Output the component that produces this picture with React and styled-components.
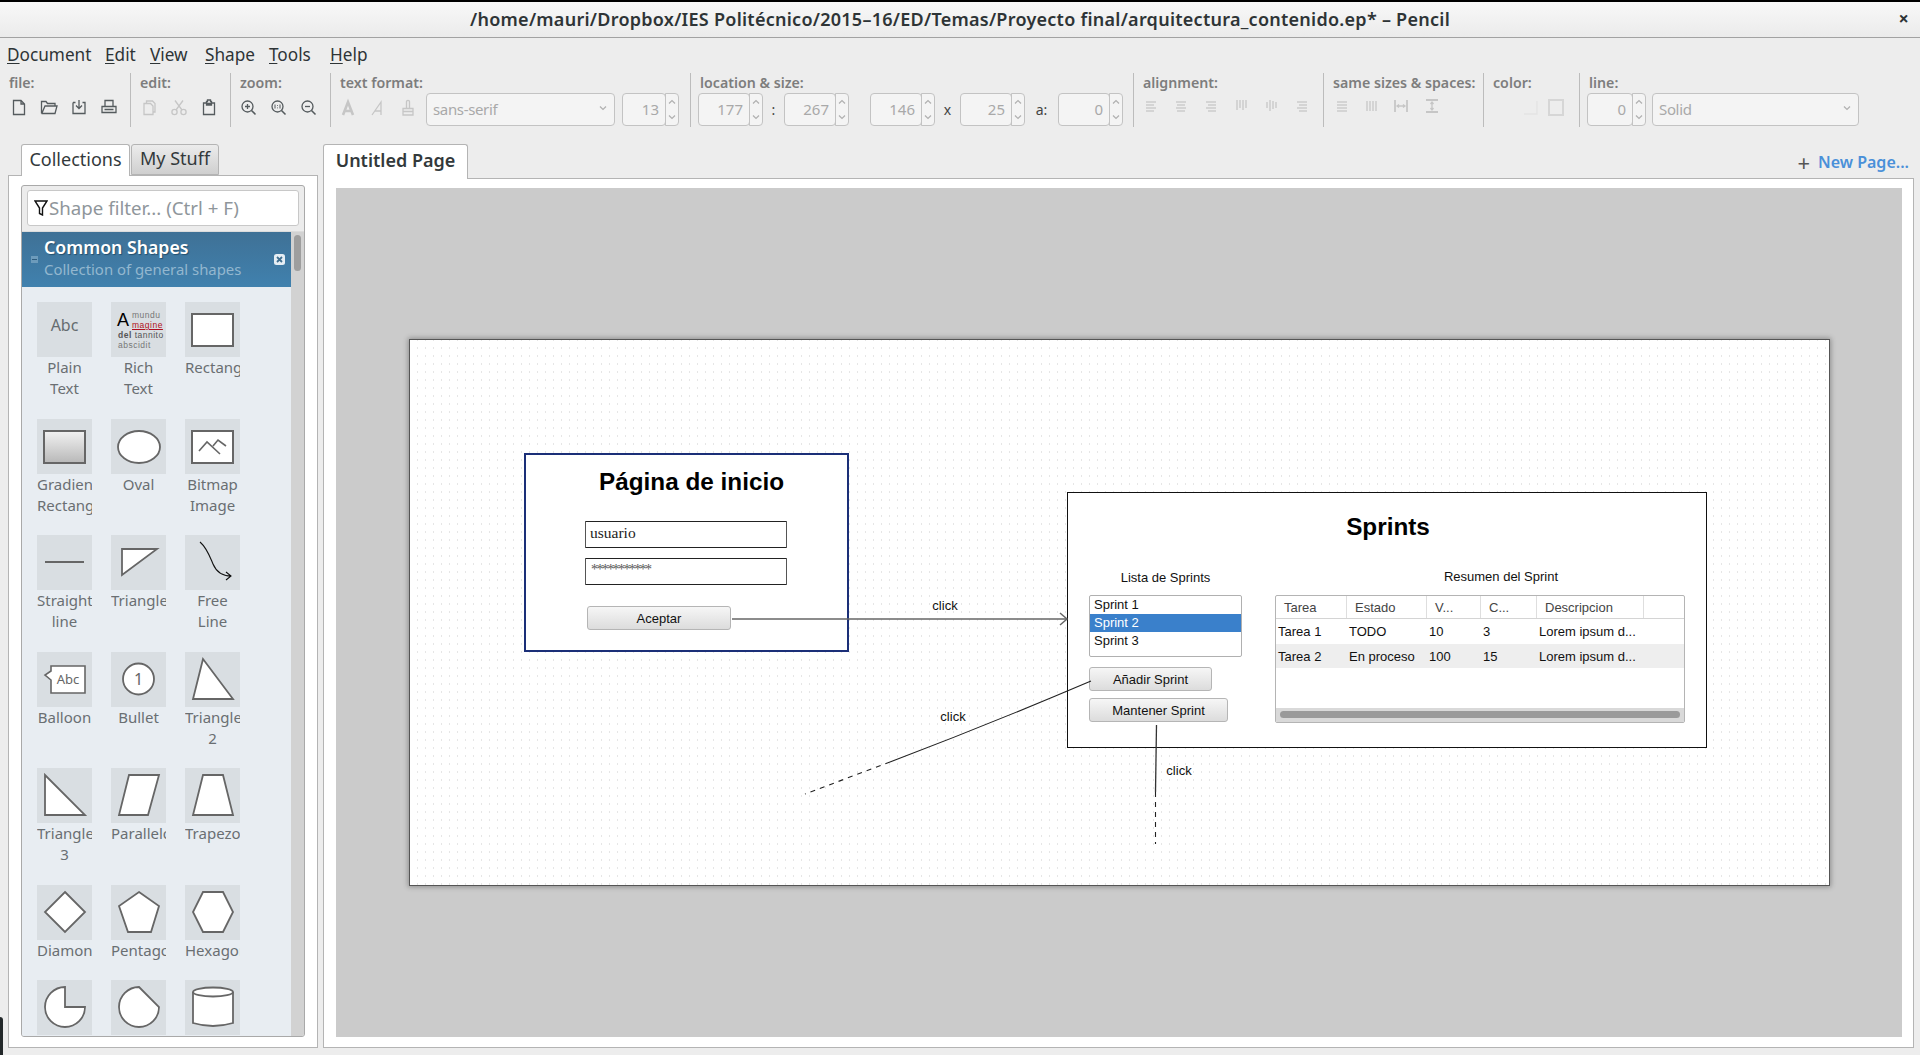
import React from "react";
import styled, { createGlobalStyle } from "styled-components";

const UI = `"Noto Sans", "Open Sans", sans-serif`;
const SANS = `"Liberation Sans", Arial, sans-serif`;

const Global = createGlobalStyle`
  html, body { margin: 0; padding: 0; background: #000; overflow: hidden; }
  #root { width: 1920px; height: 1055px; }
  * { box-sizing: border-box; }
`;

const Screen = styled.div`
  position: relative; width: 1920px; height: 1055px; background: #000;
  padding-top: 2px; overflow: hidden; font-family: ${UI};
`;
const Win = styled.div`
  height: 1053px; background: #ededed; border-radius: 5px 5px 0 0;
  display: flex; flex-direction: column;
`;
const TitleBar = styled.div`
  height: 36px; flex: none; display: flex; align-items: center; justify-content: center;
  position: relative; background: linear-gradient(#f8f8f8, #ebebeb); padding-bottom: 1px;
  border-bottom: 1px solid #a2a2a2; color: #2e3436; font-size: 18px; font-weight: 600; letter-spacing: 0.26px;
`;
const CloseX = styled.span`
  position: absolute; right: 11px; top: 4px; font-size: 18px; font-weight: 700; color: #2e3436;
`;
const MenuBar = styled.div`
  height: 35px; flex: none; display: flex; align-items: center; padding: 0 0 2px 7px;
  color: #2e3436; font-size: 17.2px;
`;
const MenuItem = styled.span`
  width: ${p => p.$w}px; flex: none;
  u { text-underline-offset: 2px; text-decoration-thickness: 1px; }
`;
const Toolbar = styled.div`
  height: 54px; flex: none; display: flex;
`;
const Group = styled.div`
  width: ${p => p.$w}px; flex: none; padding-left: 9px; border-right: 1px solid ${p => (p.$last ? "transparent" : "#bcbcbc")};
  display: flex; flex-direction: column;
`;
const GroupLabel = styled.div`
  height: 20px; line-height: 20px; font-size: 14.2px; font-weight: 600; color: #7d7d7d; white-space: nowrap;
`;
const Controls = styled.div`
  display: flex; align-items: flex-start; height: 33px; margin-left: ${p => p.$ml}px;
`;
const IconCell = styled.svg`
  width: 30px; height: 24px; margin-top: 3px; flex: none; fill: none; stroke-width: 1.3px;
  stroke: ${p => (p.$off ? "#c6c6c6" : "#555b5e")};
`;
const Select = styled.div`
  width: ${p => p.$w}px; height: 33px; flex: none; border: 1px solid #c3c3c3; border-radius: 4px; background: #f4f4f4;
  display: flex; align-items: center; justify-content: space-between; padding: 0 6px 2px;
  color: #a9a9a9; font-size: 15px; letter-spacing: -0.35px;
`;
const NumBox = styled.div`
  width: ${p => p.$w}px; height: 33px; flex: none; border: 1px solid #c3c3c3; border-radius: 4px; background: #f4f4f4;
  display: flex; align-items: center; justify-content: flex-end; padding: 0 6px 2px 0;
  color: #a9a9a9; font-size: 15px;
`;
const Spin = styled.div`
  width: 14px; height: 33px; flex: none; border: 1px solid #c3c3c3; border-radius: 0 4px 4px 0; margin-left: -1px;
  background: #f4f4f4; display: flex; flex-direction: column; align-items: center; justify-content: space-around;
`;
const Sep = styled.span`
  width: ${p => p.$w}px; flex: none; height: 33px; line-height: 33px; text-align: center; color: #444; font-size: 14px;
`;
const Gap = styled.span` width: ${p => p.$w}px; flex: none; `;

const Main = styled.div`
  flex: 1; display: flex; padding: 17px 0 7px 8px; min-height: 0;
`;
const Side = styled.div`
  width: 310px; flex: none; display: flex; flex-direction: column; margin-right: 5px;
`;
const TabRow = styled.div`
  height: 31px; flex: none; display: flex; gap: 1px; padding-left: 13px;
`;
const SideTab = styled.div`
  width: ${p => p.$w}px; border: 1px solid #b4b4b4; border-bottom: ${p => (p.$on ? "none" : "1px solid #b4b4b4")};
  border-radius: 3px 3px 0 0; background: ${p => (p.$on ? "#fff" : "linear-gradient(#ececec,#cfcfcf)")};
  display: flex; align-items: center; justify-content: center; font-size: 18px; color: #33393b; padding-bottom: 3px;
  position: relative; z-index: 1; margin-bottom: ${p => (p.$on ? "-1px" : "0")};
`;
const SidePanel = styled.div`
  flex: 1; min-height: 0; background: #fff; border: 1px solid #b4b4b4; padding: 9px 12px 10px;
`;
const Collection = styled.div`
  height: 100%; border: 1px solid #a9a9a9; border-radius: 3px; background: #ececec;
  display: flex; flex-direction: column; overflow: hidden;
`;
const FilterWrap = styled.div` height: 46px; flex: none; padding: 4px 5px 0; border-bottom: 1px solid #dcdcdc; `;
const Filter = styled.div`
  height: 36px; background: #fff; border: 1px solid #c8c8c8; border-radius: 3px; display: flex; align-items: center;
  padding: 0 0 1px 6px; gap: 1px; color: #8f969b; font-size: 18.7px; white-space: nowrap;
`;
const ScrollArea = styled.div` flex: 1; display: flex; min-height: 0; `;
const Shapes = styled.div` flex: 1; min-width: 0; background: #e8edf2; overflow: hidden; `;
const SBar = styled.div` width: 13px; flex: none; background: #d2d2d2; padding: 3px 3px; `;
const SThumb = styled.div` height: 36px; background: #9e9e9e; border-radius: 4px; `;
const CollHead = styled.div`
  height: 55px; background: linear-gradient(#3f7196, #4081ae); position: relative; padding: 3px 0 0 22px;
`;
const CollTitle = styled.div`
  color: #fff; font-weight: 600; font-size: 17.7px; line-height: 24px; text-shadow: 1px 1px 1px #23506e;
`;
const CollSub = styled.div` color: #93b7cf; font-size: 14.9px; line-height: 21px; white-space: nowrap; `;
const Minus = styled.span`
  position: absolute; left: 9px; top: 24px; width: 7px; height: 7px; background: #6d9bbb; display: flex; align-items: center;
  &::after { content: ""; display: block; width: 5px; height: 1px; margin: 0 1px; background: #2e5c7d; }
`;
const HeadClose = styled.svg` position: absolute; right: 6px; top: 22px; width: 11px; height: 11px; `;
const ShapeGrid = styled.div`
  display: grid; grid-template-columns: repeat(3, 55px); column-gap: 19px; row-gap: 19.5px;
  padding: 15px 0 0 15px; align-items: start;
`;
const ShapeItem = styled.div` width: 55px; `;
const Tile = styled.div` width: 55px; height: 55px; background: #d9dee2; position: relative; `;
const TileSvg = styled.svg` width: 55px; height: 55px; display: block; `;
const ShapeName = styled.div`
  width: 55px; overflow: hidden; text-align: center; font-size: 15px; line-height: 21px; color: #6a6f72;
`;
const RichA = styled.span`
  position: absolute; left: 6px; top: 8px; font: 18px/21px ${SANS}; color: #000;
`;
const RichLine = styled.span`
  position: absolute; left: ${p => p.$x}px; top: ${p => p.$y}px; font: 8.5px/9px ${SANS};
  color: ${p => p.$c}; letter-spacing: 0.5px; white-space: nowrap;
  text-decoration: ${p => (p.$u ? "underline" : "none")};
`;
const PlainAbc = styled.span`
  position: absolute; left: 0; right: 0; top: 11px; text-align: center; font-size: 16px; line-height: 24px; color: #666c70;
`;

const Work = styled.div` flex: 1; display: flex; flex-direction: column; min-width: 0; margin-right: 6px; `;
const WorkTabs = styled.div`
  height: 34px; flex: none; display: flex; justify-content: space-between;
`;
const PageTab = styled.div`
  width: 145px; border: 1px solid #b4b4b4; border-bottom: none; background: #fff; border-radius: 3px 3px 0 0;
  display: flex; align-items: center; justify-content: center; font-size: 18px; font-weight: 600; color: #33393b; padding-bottom: 4px;
  margin-bottom: -1px; position: relative; z-index: 1;
`;
const NewPage = styled.div`
  display: flex; align-items: center; gap: 6px; padding-right: 5px; height: 36px; font-size: 16px; font-weight: 600; color: #4a90d9;
`;
const Plus = styled.span` color: #555; font-size: 22px; font-weight: 400; line-height: 1; margin-right: 2px; `;
const Pane = styled.div`
  flex: 1; min-height: 0; border: 1px solid #b4b4b4; background: #fff; padding: 9px 11px 10px 12px;
`;
const Gray = styled.div`
  height: 100%; background: #cbcbcb; padding: 151px 0 0 73px; overflow: hidden;
`;
const Page = styled.div`
  position: relative; width: 1421px; height: 547px; box-shadow: inset 0 0 0 1px #555, 0 0 5px 1px rgba(0,0,0,.3);
  background-image: linear-gradient(#fff 6px, transparent 6px), linear-gradient(90deg, #e6e6e6 1px, #fff 1px);
  background-size: 8px 8px; background-position: 0 2px;
  font-family: ${SANS}; color: #111;
`;
const Frame = styled.div`
  position: absolute; left: ${p => p.$x}px; top: ${p => p.$y}px; width: ${p => p.$w}px; height: ${p => p.$h}px;
  background: #fff; border: ${p => p.$b};
`;
const Heading = styled.div`
  position: absolute; left: ${p => p.$x}px; top: ${p => p.$y}px; width: ${p => p.$w}px; text-align: center;
  font-weight: 700; font-size: 24.3px; line-height: 30px; color: #000;
`;
const Caption = styled.div`
  position: absolute; left: ${p => p.$x}px; top: ${p => p.$y}px; width: ${p => p.$w}px; text-align: center;
  font-size: 13px; line-height: 16px; color: #111; white-space: nowrap;
`;
const WireInput = styled.div`
  position: absolute; left: ${p => p.$x}px; top: ${p => p.$y}px; width: 202px; height: 27px;
  border: 1.5px solid #555; border-top-color: #222; border-bottom-color: #222; border-radius: 1px; background: #fff;
  font: 400 ${p => (p.$secret ? "14px" : "15.5px")}/18px "Liberation Serif", serif;
  padding: ${p => (p.$secret ? "2px 5px" : "2px 4px")};
  letter-spacing: ${p => (p.$secret ? "-1.6px" : "0")}; color: ${p => (p.$secret ? "#555" : "#222")}; overflow: hidden;
`;
const WireButton = styled.div`
  position: absolute; left: ${p => p.$x}px; top: ${p => p.$y}px; width: ${p => p.$w}px; height: ${p => p.$h}px;
  border: 1px solid #b5b5b5; border-radius: 3px; background: linear-gradient(#f6f6f6, #dcdcdc);
  font-size: 13px; line-height: ${p => p.$h}px; text-align: center; color: #111; white-space: nowrap;
`;
const ListBox = styled.div`
  position: absolute; left: 680px; top: 256px; width: 153px; height: 62px; background: #fff; border: 1px solid #b0b0b0; border-radius: 2px;
`;
const ListRow = styled.div`
  height: 18px; line-height: 18px; padding-left: 4px; font-size: 13px;
  background: ${p => (p.$on ? "#3a80cb" : "transparent")}; color: ${p => (p.$on ? "#fff" : "#111")};
`;
const Table = styled.div`
  position: absolute; left: 866px; top: 256px; width: 410px; height: 128px; background: #fff; border: 1px solid #b4b4b4; border-radius: 2px;
  display: flex; flex-direction: column; overflow: hidden;
`;
const THead = styled.div` height: 23px; flex: none; display: flex; border-bottom: 1px solid #d4d4d4; `;
const TH = styled.div`
  width: ${p => p.$w}px; flex: none; padding-left: 8px; line-height: 23px; font-size: 13px; color: #444;
  border-right: 1px solid #dedede; white-space: nowrap;
`;
const TRow = styled.div`
  height: ${p => p.$h}px; flex: none; display: flex; background: ${p => (p.$alt ? "#eeeeee" : "#fff")}; align-items: center;
`;
const TD = styled.div` width: ${p => p.$w}px; flex: none; padding-left: 2px; font-size: 13px; color: #111; white-space: nowrap; `;
const TFill = styled.div` flex: 1; `;
const TScroll = styled.div` height: 14px; flex: none; background: #d9d9d9; padding: 3px 4px 0; `;
const TThumb = styled.div` height: 7px; background: #9a9a9a; border-radius: 4px; `;
const Lines = styled.svg` position: absolute; left: 0; top: 0; width: 1420px; height: 547px; pointer-events: none; fill: none; `;
const BackWin = styled.div`
  position: absolute; left: 0; bottom: 0; width: 3px; height: 38px; background: #23282a; border-radius: 0 3px 0 0;
`;

const Chevron = ({ up, c = "#b0b0b0", w = 8 }) => (
  <svg width={w} height={5} viewBox="0 0 8 5" fill="none" stroke={c} strokeWidth="1.2">
    <path d={up ? "M1 4.5L4 1.5L7 4.5" : "M1 .5L4 3.5L7 .5"} />
  </svg>
);
const Spinner = () => (<Spin><Chevron up /><Chevron /></Spin>);
const Num = ({ w, v }) => (<><NumBox $w={w}>{v}</NumBox><Spinner /></>);

const I = ({ off, d, children }) => (
  <IconCell $off={off} viewBox="0 0 30 24">{d ? <path d={d} /> : null}{children}</IconCell>
);
const lensAt = (extra) => (
  <>
    <circle cx="13.5" cy="10.5" r="5.5" />
    <path d="M17.5 14.5L21.5 18.5" strokeWidth="1.6" />
    {extra}
  </>
);
const hLines = (rows) => rows.map(([x1, x2, y], i) => <path key={i} d={`M${x1} ${y}H${x2}`} />);
const vLines = (cols) => cols.map(([x, y1, y2], i) => <path key={i} d={`M${x} ${y1}V${y2}`} />);

const Diagram = () => (
  <Page>
    <Frame $x={115} $y={114} $w={325} $h={199} $b="2px solid #1b2f78" />
    <Heading $x={120} $y={128} $w={325}>Página de inicio</Heading>
    <WireInput $x={176} $y={182}>usuario</WireInput>
    <WireInput $x={176} $y={219} $secret>***********</WireInput>
    <WireButton $x={178} $y={267} $w={144} $h={24}>Aceptar</WireButton>

    <Frame $x={658} $y={153} $w={640} $h={256} $b="1.5px solid #111" />
    <Heading $x={659} $y={173} $w={640}>Sprints</Heading>
    <Caption $x={680} $y={231} $w={153}>Lista de Sprints</Caption>
    <Caption $x={1000} $y={230} $w={184}>Resumen del Sprint</Caption>
    <ListBox>
      <ListRow>Sprint 1</ListRow>
      <ListRow $on>Sprint 2</ListRow>
      <ListRow>Sprint 3</ListRow>
    </ListBox>
    <WireButton $x={680} $y={328} $w={123} $h={24}>Añadir Sprint</WireButton>
    <WireButton $x={680} $y={359} $w={139} $h={24}>Mantener Sprint</WireButton>
    <Table>
      <THead>
        <TH $w={71}>Tarea</TH><TH $w={80}>Estado</TH><TH $w={54}>V...</TH><TH $w={56}>C...</TH><TH $w={107}>Descripcion</TH>
      </THead>
      <TRow $h={25}><TD $w={71}>Tarea 1</TD><TD $w={80}>TODO</TD><TD $w={54}>10</TD><TD $w={56}>3</TD><TD $w={107}>Lorem ipsum d...</TD></TRow>
      <TRow $h={24} $alt><TD $w={71}>Tarea 2</TD><TD $w={80}>En proceso</TD><TD $w={54}>100</TD><TD $w={56}>15</TD><TD $w={107}>Lorem ipsum d...</TD></TRow>
      <TFill />
      <TScroll><TThumb /></TScroll>
    </Table>
    <Caption $x={496} $y={259} $w={80}>click</Caption>
    <Caption $x={502} $y={370} $w={84}>click</Caption>
    <Caption $x={730} $y={424} $w={80}>click</Caption>
    <Lines viewBox="0 0 1420 547">
      <path d="M323 280H657" stroke="#666" strokeWidth="1.6" />
      <path d="M651 274L658 280L651 286" stroke="#666" strokeWidth="1.5" />
      <path d="M682 342Q581 385 481 423" stroke="#222" strokeWidth="1.1" />
      <path d="M481 423L396 455" stroke="#222" strokeWidth="1.1" strokeDasharray="5 5" />
      <path d="M747.5 386L746.5 453" stroke="#333" strokeWidth="1.3" />
      <path d="M746.5 453V505" stroke="#222" strokeWidth="1.1" strokeDasharray="5 5" />
    </Lines>
  </Page>
);

const S = "#666";
const shapes = [
  ["Plain Text", <PlainAbc key="a">Abc</PlainAbc>],
  ["Rich Text", <React.Fragment key="r">
    <RichA>A</RichA>
    <RichLine $x={21} $y={9} $c="#777">mundu</RichLine>
    <RichLine $x={21} $y={19} $c="#b01020" $u>magine</RichLine>
    <RichLine $x={7} $y={29} $c="#555"><b>del</b> tannito</RichLine>
    <RichLine $x={7} $y={39} $c="#777">abscidit</RichLine>
  </React.Fragment>],
  ["Rectangle", <rect x="7" y="12" width="41" height="32" fill="#fff" stroke={S} strokeWidth="2" />],
  ["Gradient Rectangle", <>
    <defs><linearGradient id="gr" x1="0" y1="0" x2="0" y2="1"><stop offset="0" stopColor="#f2f2f2" /><stop offset="1" stopColor="#b8b8b8" /></linearGradient></defs>
    <rect x="7" y="12" width="41" height="32" fill="url(#gr)" stroke={S} strokeWidth="2" /></>],
  ["Oval", <ellipse cx="28" cy="28" rx="21" ry="16" fill="#fff" stroke={S} strokeWidth="1.8" />],
  ["Bitmap Image", <>
    <rect x="7" y="12" width="41" height="32" fill="#fff" stroke={S} strokeWidth="2" />
    <path d="M14 32L22 23L35 35M28 27L33 21L41 27" fill="none" stroke={S} strokeWidth="1.6" /></>],
  ["Straight line", <path d="M8 27H47" stroke={S} strokeWidth="2" />],
  ["Triangle", <path d="M11 14H46L11 40Z" fill="#fff" stroke={S} strokeWidth="1.8" />],
  ["Free Line", <path d="M15 7C22 13 25 22 28 29C31 36 36 41 46 41M41 37L46 41L41 45" fill="none" stroke="#111" strokeWidth="1.1" />],
  ["Balloon", <>
    <path d="M14 14H48V41H14V28L8 23L14 19Z" fill="#fff" stroke={S} strokeWidth="1.6" />
    <text x="31" y="32" textAnchor="middle" fontSize="13" fill="#666" fontFamily="Noto Sans">Abc</text></>],
  ["Bullet", <>
    <circle cx="27.5" cy="27" r="15.5" fill="#fff" stroke={S} strokeWidth="1.8" />
    <text x="27.5" y="33" textAnchor="middle" fontSize="16" fill="#666" fontFamily="Noto Sans">1</text></>],
  ["Triangle 2", <path d="M18 7L8 47H48Z" fill="#fff" stroke={S} strokeWidth="1.8" />],
  ["Triangle 3", <path d="M8 7V47H48Z" fill="#fff" stroke={S} strokeWidth="1.8" />],
  ["Parallelogram", <path d="M18 7H48L37 47H8Z" fill="#fff" stroke={S} strokeWidth="1.8" />],
  ["Trapezoid", <path d="M18 7H38L48 47H8Z" fill="#fff" stroke={S} strokeWidth="1.8" />],
  ["Diamond", <path d="M28 7L48 27L28 47L8 27Z" fill="#fff" stroke={S} strokeWidth="1.8" />],
  ["Pentagon", <path d="M28 7L48 21L40 47H17L8 21Z" fill="#fff" stroke={S} strokeWidth="1.8" />],
  ["Hexagon", <path d="M18 7H38L48 27L38 47H18L8 27Z" fill="#fff" stroke={S} strokeWidth="1.8" />],
  ["", <path d="M28 7V27H48A20 20 0 1 1 28 7Z" fill="#fff" stroke={S} strokeWidth="1.8" />],
  ["", <path d="M28 7L48 27A20 20 0 1 1 28 7Z" fill="#fff" stroke={S} strokeWidth="1.8" />],
  ["", <>
    <path d="M8 12V43Q28 49 48 43V12" fill="#fff" stroke={S} strokeWidth="1.8" />
    <ellipse cx="28" cy="12" rx="20" ry="4.5" fill="#fff" stroke={S} strokeWidth="1.8" /></>],
];

export default function App() {
  return (
    <Screen>
      <Global />
      <Win>
        <TitleBar>
          /home/mauri/Dropbox/IES Politécnico/2015–16/ED/Temas/Proyecto final/arquitectura_contenido.ep* – Pencil
          <CloseX>×</CloseX>
        </TitleBar>
        <MenuBar>
          <MenuItem $w={98}><u>D</u>ocument</MenuItem>
          <MenuItem $w={45}><u>E</u>dit</MenuItem>
          <MenuItem $w={55}><u>V</u>iew</MenuItem>
          <MenuItem $w={64}><u>S</u>hape</MenuItem>
          <MenuItem $w={61}><u>T</u>ools</MenuItem>
          <MenuItem $w={50}><u>H</u>elp</MenuItem>
        </MenuBar>
        <Toolbar>
          <Group $w={131}>
            <GroupLabel>file:</GroupLabel>
            <Controls $ml={-5}>
              <I d="M9.5 4.5H17L20.5 8V18.5H9.5ZM17 4.5V8H20.5" />
              <I d="M7.5 17.5V5.5H12L13.5 7.5H21V9.5M7.5 17.5H21L23 10H11L8 17" />
              <I d="M9 6.5H11.5M18.5 6.5H21V17.5H9V6.5M15 4V12M12 9.5L15 12.5L18 9.5" />
              <I d="M11 10V4.5H19V10M8 10.5H22V16.5H8ZM10.5 13.5H19.5" />
            </Controls>
          </Group>
          <Group $w={100}>
            <GroupLabel>edit:</GroupLabel>
            <Controls $ml={-6}>
              <I off d="M10 7.5H16.5L19 10V18.5H10ZM12.5 7.5V5H18.5L21 7.5V16H19" />
              <I off><circle cx="10.5" cy="16" r="2.6" /><circle cx="19.5" cy="16" r="2.6" /><path d="M12 14L19 4.5M18 14L11 4.5" /></I>
              <I d="M9.5 7H12.5V5.5H13.5V4H16.5V5.5H17.5V7H20.5V18.5H9.5ZM12.5 7.5H17.5V9H12.5Z" />
            </Controls>
          </Group>
          <Group $w={100}>
            <GroupLabel>zoom:</GroupLabel>
            <Controls $ml={-6}>
              <I>{lensAt(<path d="M11 10.5H16M13.5 8V13" />)}</I>
              <I>{lensAt(<path d="M11 8.5V12.5M13.5 9V9.8M13.5 11.5V12.3M16 8.5V12.5" strokeWidth="1" />)}</I>
              <I>{lensAt(<path d="M11 10.5H16" />)}</I>
            </Controls>
          </Group>
          <Group $w={360}>
            <GroupLabel>text format:</GroupLabel>
            <Controls $ml={-7}>
              <I off><path d="M10 19L15 6L20 19M12 15H18" strokeWidth="2.6" /></I>
              <I off d="M9 19L18 6V19M12 15H18" />
              <I off d="M13.5 12V5.5C13.5 4 16.5 4 16.5 5.5V12M10 12.5H20V19H10ZM10 15.5H20" />
              <Gap $w={3} />
              <Select $w={189}>sans-serif<Chevron w={10} /></Select>
              <Gap $w={7} />
              <Num w={44} v="13" />
            </Controls>
          </Group>
          <Group $w={443}>
            <GroupLabel>location &amp; size:</GroupLabel>
            <Controls $ml={-2}>
              <Num w={52} v="177" />
              <Sep $w={21}>:</Sep>
              <Num w={52} v="267" />
              <Gap $w={21} />
              <Num w={52} v="146" />
              <Sep $w={25}>x</Sep>
              <Num w={52} v="25" />
              <Sep $w={33}>a:</Sep>
              <Num w={52} v="0" />
            </Controls>
          </Group>
          <Group $w={190}>
            <GroupLabel>alignment:</GroupLabel>
            <Controls $ml={-7}>
              <I off>{hLines([[10,20,6],[10,18,9],[10,20,12],[10,18,15]])}</I>
              <I off>{hLines([[10,20,6],[11,19,9],[10,20,12],[11,19,15]])}</I>
              <I off>{hLines([[10,20,6],[12,20,9],[10,20,12],[12,20,15]])}</I>
              <I off>{vLines([[11,4,14],[14,4,12],[17,4,14],[20,4,12]])}</I>
              <I off>{vLines([[11,6,12],[14,4,15],[17,5,13],[20,6,12]])}</I>
              <I off>{hLines([[11,21,6],[13,21,9],[11,21,12],[13,21,15]])}</I>
            </Controls>
          </Group>
          <Group $w={160}>
            <GroupLabel>same sizes &amp; spaces:</GroupLabel>
            <Controls $ml={-6}>
              <I off>{hLines([[10,20,6],[10,20,9],[10,20,12],[10,20,15]])}</I>
              <I off>{vLines([[10,5,15],[13,5,15],[16,5,15],[19,5,15]])}</I>
              <I off><path d="M8 4V16M20 4V16" strokeWidth="1.8" /><path d="M10 10H18M12 8.5L10 10L12 11.5M16 8.5L18 10L16 11.5" /></I>
              <I off><path d="M9 4H21M9 16H21" strokeWidth="1.8" /><path d="M15 6V14M13.5 8L15 6L16.5 8M13.5 12L15 14L16.5 12" /></I>
            </Controls>
          </Group>
          <Group $w={96}>
            <GroupLabel>color:</GroupLabel>
            <Controls $ml={0}>
              <Gap $w={21} />
              <I off><path d="M10 18H23V5" stroke="#e3e3e3" /></I>
              <I off><rect x="5" y="4" width="14" height="15" strokeWidth="2" stroke="#d6d6d6" /></I>
            </Controls>
          </Group>
          <Group $w={340} $last>
            <GroupLabel>line:</GroupLabel>
            <Controls $ml={-2}>
              <Num w={46} v="0" />
              <Gap $w={6} />
              <Select $w={207}>Solid<Chevron w={10} /></Select>
            </Controls>
          </Group>
        </Toolbar>
        <Main>
          <Side>
            <TabRow>
              <SideTab $w={109} $on>Collections</SideTab>
              <SideTab $w={88}>My Stuff</SideTab>
            </TabRow>
            <SidePanel>
              <Collection>
                <FilterWrap>
                  <Filter>
                    <svg width="14" height="16" viewBox="0 0 14 16" fill="none" stroke="#111" strokeWidth="1.4">
                      <path d="M1 1H13L8.5 8V15L5.5 13.5V8Z" />
                    </svg>
                    Shape filter... (Ctrl + F)
                  </Filter>
                </FilterWrap>
                <ScrollArea>
                  <Shapes>
                    <CollHead>
                      <CollTitle>Common Shapes</CollTitle>
                      <CollSub>Collection of general shapes</CollSub>
                      <Minus />
                      <HeadClose viewBox="0 0 11 11">
                        <rect width="11" height="11" rx="2.5" fill="#e6eef4" />
                        <path d="M3 3L8 8M8 3L3 8" stroke="#3f6f90" strokeWidth="1.8" />
                      </HeadClose>
                    </CollHead>
                    <ShapeGrid>
                      {shapes.map(([name, art], i) => (
                        <ShapeItem key={i}>
                          <Tile>
                            {i < 2 ? art : <TileSvg viewBox="0 0 55 55">{art}</TileSvg>}
                          </Tile>
                          {name ? <ShapeName>{name}</ShapeName> : null}
                        </ShapeItem>
                      ))}
                    </ShapeGrid>
                  </Shapes>
                  <SBar><SThumb /></SBar>
                </ScrollArea>
              </Collection>
            </SidePanel>
          </Side>
          <Work>
            <WorkTabs>
              <PageTab>Untitled Page</PageTab>
              <NewPage><Plus>+</Plus>New Page...</NewPage>
            </WorkTabs>
            <Pane>
              <Gray>
                <Diagram />
              </Gray>
            </Pane>
          </Work>
        </Main>
      </Win>
      <BackWin />
    </Screen>
  );
}
